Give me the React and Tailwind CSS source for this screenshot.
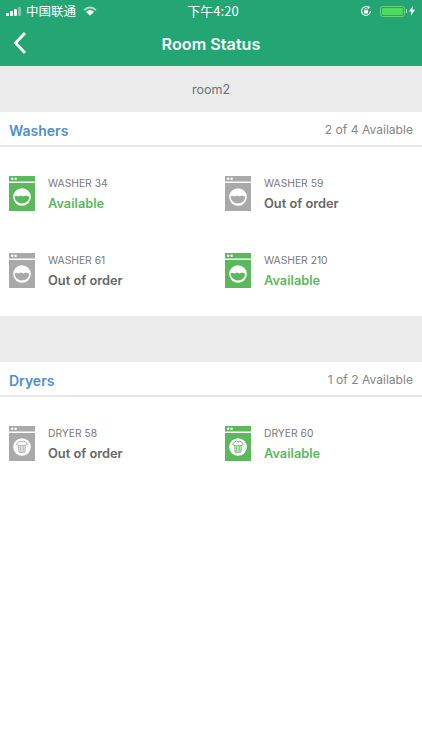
import React from "react";

const washers = [
  { name: "WASHER 34", ok: true },
  { name: "WASHER 59", ok: false },
  { name: "WASHER 61", ok: false },
  { name: "WASHER 210", ok: true },
];

const dryers = [
  { name: "DRYER 58", ok: false },
  { name: "DRYER 60", ok: true },
];

const MachineIcon = ({ ok, dryer }) => {
  const fill = ok ? "#5cb85c" : "#a9a9a9";
  return (
    <svg width="26" height="35" viewBox="0 0 26 35" className="shrink-0">
      <rect x="0" y="0" width="26" height="5.5" fill={fill} />
      <circle cx="3.2" cy="2.8" r="1.2" fill="#fff" />
      <circle cx="6.6" cy="2.8" r="1.2" fill="#fff" />
      <rect x="0" y="7" width="26" height="28" fill={fill} />
      <circle cx="13" cy="21" r="8.8" fill="#fff" />
      {dryer ? (
        <g fill="none" stroke={fill} strokeWidth="1">
          <path d="M9.8 15.8 L11.4 15.2 Q13 16.6 14.6 15.2 L16.2 15.8 L18.4 18 L17 19.6 L16.2 19 L16 26 Q13 26.8 10 26 L9.8 19 L9 19.6 L7.6 18 Z" />
          <path d="M11.4 20 V25.4 M13 20 V25.8 M14.6 20 V25.4" strokeWidth="0.8" />
          <path d="M9.8 19.4 H16.2" strokeWidth="0.8" />
        </g>
      ) : (
        <path
          d="M5.6 20.2 Q6.9 19.2 8.2 20 T10.7 20 T13.2 20 T15.7 20 T18.2 20 T20.4 20.2 A7.4 7.4 0 0 1 5.6 20.2 Z"
          fill={fill}
        />
      )}
    </svg>
  );
};

const Machine = ({ item, dryer }) => (
  <div className="h-[77px] flex items-center gap-[13px]">
    <MachineIcon ok={item.ok} dryer={dryer} />
    <div className="flex flex-col">
      <span className="text-[10.3px] leading-[16px] text-[#787878]">{item.name}</span>
      <span
        className={
          item.ok
            ? "mt-[4px] text-[12.8px] leading-[18px] font-semibold text-[#5cb85c]"
            : "mt-[4px] text-[12.8px] leading-[18px] font-semibold text-[#666666]"
        }>
        {item.ok ? "Available" : "Out of order"}
      </span>
    </div>
  </div>
);

const SectionHeader = ({ title, count }) => (
  <div className="h-[35px] flex items-center justify-between pl-[9px] pr-[9px] pt-[4px] bg-white border-b-2 border-[#e8e8e8]">
    <span className="text-[14px] font-semibold text-[#4a90d2]">{title}</span>
    <span className="text-[12.1px] text-[#858585]">{count}</span>
  </div>
);

const StatusBar = () => (
  <div className="h-[22px] relative flex items-center justify-between pl-[6px] pr-[7px] text-white">
    <div className="flex items-center">
      <div className="flex items-end gap-[1px]">
        <div className="w-[3px] h-[3px] rounded-[1px] bg-white" />
        <div className="w-[3px] h-[5px] rounded-[1px] bg-white" />
        <div className="w-[3px] h-[7px] rounded-[1px] bg-white" />
        <div className="w-[3px] h-[9px] rounded-[1px] bg-white/40" />
      </div>
      <span className="ml-[5px] text-[12.5px] font-['Noto_Sans_CJK_SC',sans-serif]">中国联通</span>
      <svg width="14" height="10" viewBox="0 0 14 10" className="ml-[7px]">
        <path d="M0.5 3.4 A9 9 0 0 1 13.5 3.4 L12.2 4.8 A7 7 0 0 0 1.8 4.8 Z" fill="#fff" fillOpacity="0.65" />
        <path d="M3 5.8 A5.6 5.6 0 0 1 11 5.8 L7 9.8 Z" fill="#fff" />
      </svg>
    </div>
    <span className="absolute left-0 right-0 pl-[4px] text-center text-[13px] font-['Noto_Sans_CJK_SC',sans-serif]">下午4:20</span>
    <div className="flex items-center">
      <svg width="12" height="12" viewBox="0 0 12 12">
        <path d="M10.4 6 A4.4 4.4 0 1 1 8.6 2.4" fill="none" stroke="#fff" strokeWidth="1.1" />
        <path d="M7.8 0.8 L10.2 2.4 L8 4 Z" fill="#fff" />
        <rect x="4" y="5.2" width="4" height="3.2" rx="0.5" fill="#fff" />
        <path d="M4.8 5.2 V4.4 A1.2 1.2 0 0 1 7.2 4.4 V5.2" fill="none" stroke="#fff" strokeWidth="0.7" />
      </svg>
      <div className="ml-[8px] w-[25px] h-[11px] rounded-[2.5px] border border-[#6fd07e] p-[1px]">
        <div className="w-full h-full rounded-[1px] bg-[#4cd964]" />
      </div>
      <div className="ml-[1px] w-[1px] h-[4px] bg-white/70" />
      <svg width="6" height="10" viewBox="0 0 6 10" className="ml-[2px]">
        <path d="M3.8 0 L0 5.6 H2.4 L1.8 10 L6 3.8 H3.4 Z" fill="#fff" />
      </svg>
    </div>
  </div>
);

const App = () => {
  return (
    <div className="w-[422px] h-[750px] bg-white overflow-hidden font-['Inter',sans-serif]">
      <div className="h-[66px] bg-[#24a574]">
        <StatusBar />
        <div className="relative h-[44px] flex items-center justify-center">
          <svg width="16" height="24" viewBox="0 0 16 24" className="absolute left-[12px] top-[9px]">
            <path d="M13 2 L3.5 12 L13 22" fill="none" stroke="#fff" strokeWidth="2.8" />
          </svg>
          <span className="text-[16.2px] font-semibold text-[#f4fbf8]">Room Status</span>
        </div>
      </div>

      <div className="h-[46px] pt-[2px] bg-[#ebebeb] flex items-center justify-center text-[12.5px] text-[#707070]">
        room2
      </div>

      <SectionHeader title="Washers" count="2 of 4 Available" />
      <div className="grid grid-cols-[216px_1fr] pl-[9px] pt-[8px] pb-[7px]">
        {washers.map((w) => (
          <Machine key={w.name} item={w} />
        ))}
      </div>

      <div className="h-[46px] bg-[#ebebeb]" />

      <SectionHeader title="Dryers" count="1 of 2 Available" />
      <div className="grid grid-cols-[216px_1fr] pl-[9px] pt-[8px]">
        {dryers.map((d) => (
          <Machine key={d.name} item={d} dryer />
        ))}
      </div>
    </div>
  );
};

export default App;
